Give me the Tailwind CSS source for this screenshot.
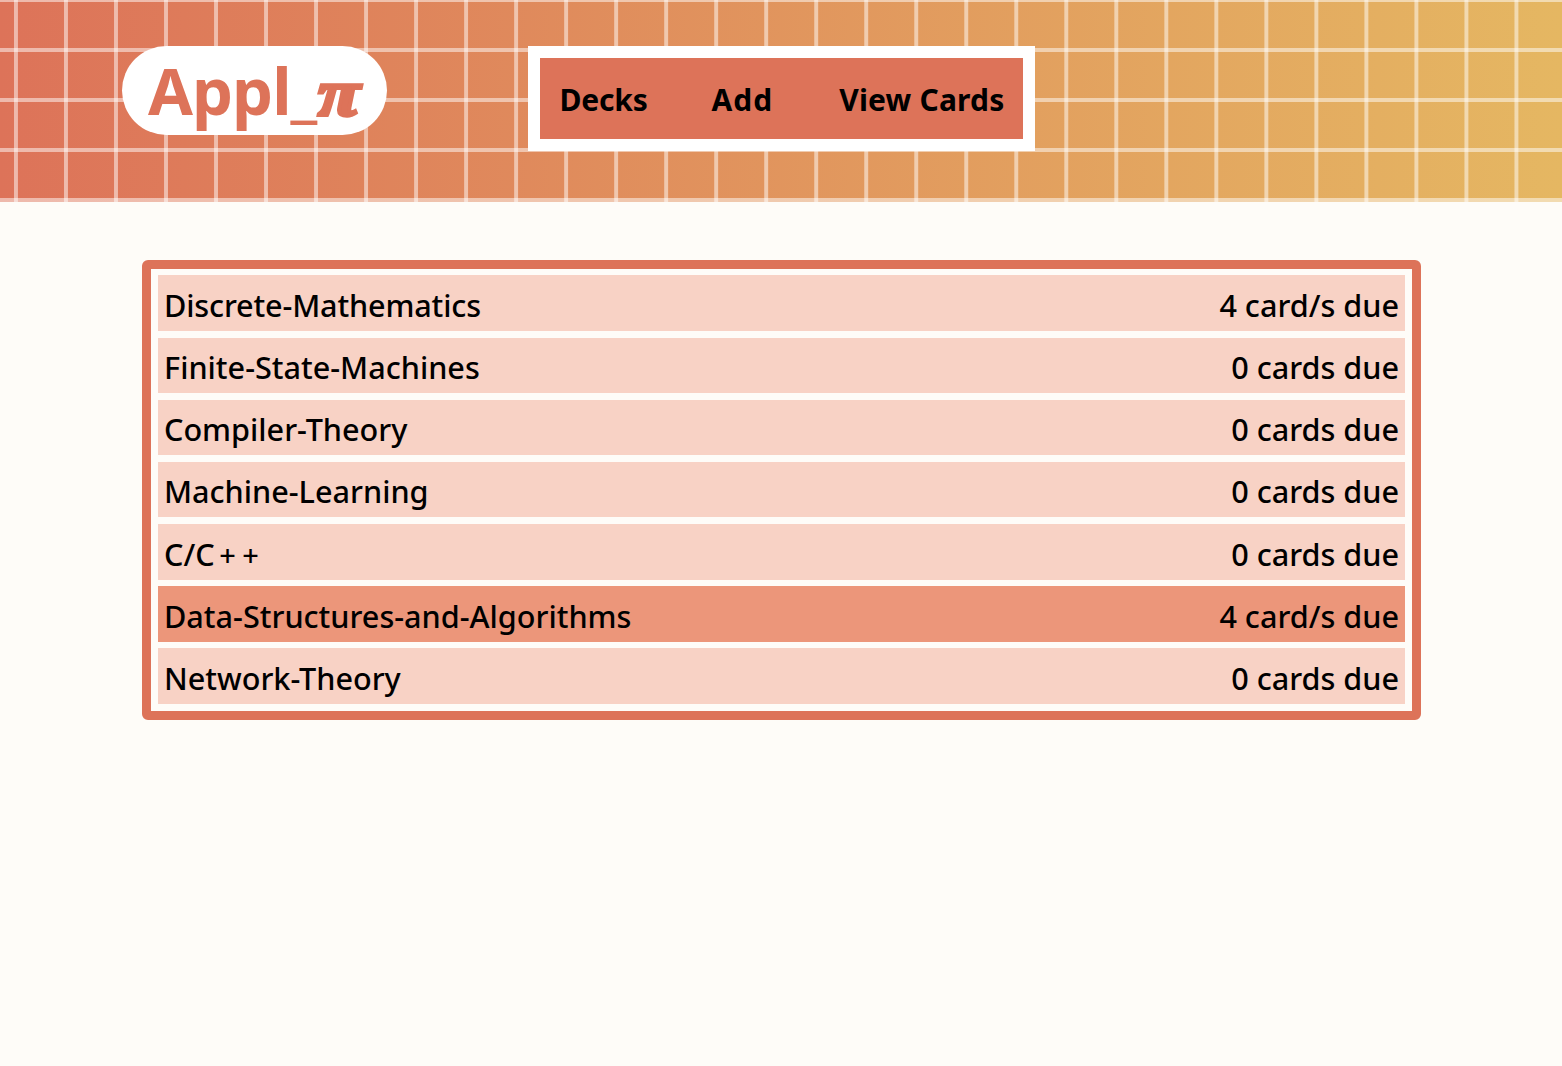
<!DOCTYPE html>
<html lang="en">
<head>
  <meta charset="UTF-8">
  <title>Appl_pi</title>
  <script src="https://cdn.jsdelivr.net/npm/@tailwindcss/browser@4"></script>
</head>
<body class="bg-[#fefcf8] min-h-[1066px] font-['Noto_Sans',sans-serif] text-black">
  <header class="relative h-[202px] bg-[linear-gradient(90deg,#dd7359,#e5b762)]">
    <div class="h-full flex items-start pt-[46px] pl-[122px] bg-[linear-gradient(rgba(255,255,255,0.5)_4px,transparent_4px),linear-gradient(90deg,rgba(255,255,255,0.5)_4px,transparent_4px)] bg-[size:50.03px_50px] bg-[position:14px_-2px]">
      <div class="w-[265px] h-[89px] rounded-[45px] bg-white flex items-baseline pt-[12px] pl-[26px] text-[#dd7359] font-bold text-[65px] leading-none whitespace-nowrap">
        <span class="tracking-[-1px]">Appl_</span><span class="font-['Liberation_Serif',serif] italic font-bold text-[66px] ml-[2px] origin-left scale-x-[1.16] [-webkit-text-stroke:3.5px_#dd7359]">π</span>
      </div>
      <nav class="ml-[141px] w-[507px] h-[105px] border-[12px] border-white bg-[#dd7359] flex items-center pt-[3px] font-bold text-[30px] leading-none">
        <a class="ml-[19.5px] tracking-[-0.2px]">Decks</a>
        <a class="ml-[64px] tracking-[1px]">Add</a>
        <a class="ml-[66px] tracking-[0.2px]">View Cards</a>
      </nav>
    </div>
  </header>

  <main class="pt-[58px] pl-[142px]">
    <div class="w-[1279px] h-[460px] border-[9px] border-[#dd7359] rounded-[6px] pt-[6.45px] pl-[7px] pr-[7px] flex flex-col gap-[6.55px] text-[30.6px] leading-none font-medium">
      <div class="h-[55.6px] bg-[#f8d2c5] flex items-center justify-between pt-[4px] pl-[6px] pr-[6px]"><span class="tracking-[-0.15px]">Discrete-Mathematics</span><span>4 card/s due</span></div>
      <div class="h-[55.6px] bg-[#f8d2c5] flex items-center justify-between pt-[4px] pl-[6px] pr-[6px]"><span>Finite-State-Machines</span><span>0 cards due</span></div>
      <div class="h-[55.6px] bg-[#f8d2c5] flex items-center justify-between pt-[4px] pl-[6px] pr-[6px]"><span>Compiler-Theory</span><span>0 cards due</span></div>
      <div class="h-[55.6px] bg-[#f8d2c5] flex items-center justify-between pt-[4px] pl-[6px] pr-[6px]"><span>Machine-Learning</span><span>0 cards due</span></div>
      <div class="h-[55.6px] bg-[#f8d2c5] flex items-center justify-between pt-[4px] pl-[6px] pr-[6px]"><span>C/C<span class="ml-[4.5px] text-[29px] tracking-[6.5px]">++</span></span><span>0 cards due</span></div>
      <div class="h-[55.6px] bg-[#ec967a] flex items-center justify-between pt-[4px] pl-[6px] pr-[6px]"><span>Data-Structures-and-Algorithms</span><span>4 card/s due</span></div>
      <div class="h-[55.6px] bg-[#f8d2c5] flex items-center justify-between pt-[4px] pl-[6px] pr-[6px]"><span>Network-Theory</span><span>0 cards due</span></div>
    </div>
  </main>
</body>
</html>
